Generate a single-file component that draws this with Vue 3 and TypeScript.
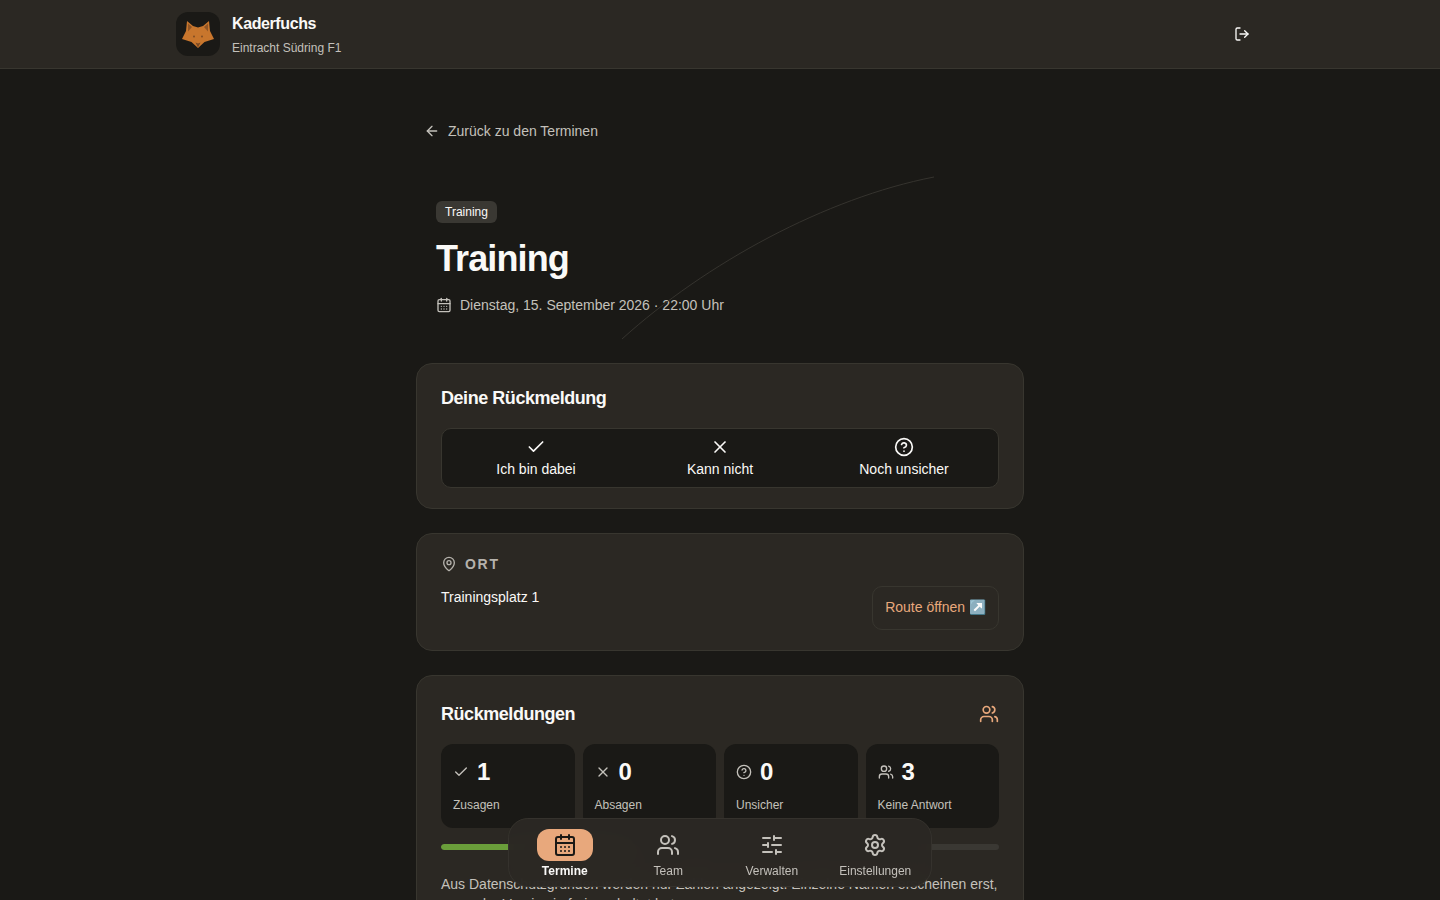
<script setup lang="ts">
const stats = [
  { icon: 'check', value: 1, label: 'Zusagen' },
  { icon: 'x', value: 0, label: 'Absagen' },
  { icon: 'help', value: 0, label: 'Unsicher' },
  { icon: 'users', value: 3, label: 'Keine Antwort' },
]
const choices = [
  { icon: 'check', label: 'Ich bin dabei' },
  { icon: 'x', label: 'Kann nicht' },
  { icon: 'help', label: 'Noch unsicher' },
]
const nav = [
  { icon: 'calendar', label: 'Termine', active: true },
  { icon: 'users', label: 'Team', active: false },
  { icon: 'sliders', label: 'Verwalten', active: false },
  { icon: 'settings', label: 'Einstellungen', active: false },
]
</script>

<template>
  <div class="page">
    <svg width="0" height="0" class="defs">
      <defs>
        <symbol id="i-check" viewBox="0 0 24 24"><path d="M20 6 9 17l-5-5" /></symbol>
        <symbol id="i-x" viewBox="0 0 24 24"><path d="M18 6 6 18" /><path d="m6 6 12 12" /></symbol>
        <symbol id="i-help" viewBox="0 0 24 24"><circle cx="12" cy="12" r="10" /><path d="M9.09 9a3 3 0 0 1 5.83 1c0 2-3 3-3 3" /><path d="M12 17h.01" /></symbol>
        <symbol id="i-users" viewBox="0 0 24 24"><path d="M16 21v-2a4 4 0 0 0-4-4H6a4 4 0 0 0-4 4v2" /><path d="M16 3.128a4 4 0 0 1 0 7.744" /><path d="M22 21v-2a4 4 0 0 0-3-3.87" /><circle cx="9" cy="7" r="4" /></symbol>
        <symbol id="i-calendar" viewBox="0 0 24 24"><path d="M8 2v4" /><path d="M16 2v4" /><rect x="3" y="4" width="18" height="18" rx="2" /><path d="M3 10h18" /><path d="M8 14h.01" /><path d="M12 14h.01" /><path d="M16 14h.01" /><path d="M8 18h.01" /><path d="M12 18h.01" /><path d="M16 18h.01" /></symbol>
        <symbol id="i-sliders" viewBox="0 0 24 24"><path d="M10 5H3" /><path d="M12 19H3" /><path d="M14 3v4" /><path d="M16 17v4" /><path d="M21 12h-9" /><path d="M21 19h-5" /><path d="M21 5h-7" /><path d="M8 10v4" /><path d="M8 12H3" /></symbol>
        <symbol id="i-settings" viewBox="0 0 24 24"><path d="M9.671 4.136a2.34 2.34 0 0 1 4.659 0 2.34 2.34 0 0 0 3.319 1.915 2.34 2.34 0 0 1 2.33 4.033 2.34 2.34 0 0 0 0 3.831 2.34 2.34 0 0 1-2.33 4.033 2.34 2.34 0 0 0-3.319 1.915 2.34 2.34 0 0 1-4.659 0 2.34 2.34 0 0 0-3.32-1.915 2.34 2.34 0 0 1-2.33-4.033 2.34 2.34 0 0 0 0-3.831A2.34 2.34 0 0 1 6.35 6.051a2.34 2.34 0 0 0 3.319-1.915" /><circle cx="12" cy="12" r="3" /></symbol>
        <symbol id="i-pin" viewBox="0 0 24 24"><path d="M20 10c0 4.993-5.539 10.193-7.399 11.799a1 1 0 0 1-1.202 0C9.539 20.193 4 14.993 4 10a8 8 0 0 1 16 0" /><circle cx="12" cy="10" r="3" /></symbol>
      </defs>
    </svg>

    <header class="topbar">
      <div class="topbar-inner">
        <div class="brand">
          <div class="logo">
            <svg viewBox="0 0 44 44" width="44" height="44">
              <path d="M11 9 L17 14 L22 15.5 L27 14 L33 9 L34 19 L38 27 L28.5 30 L22 36 L15.5 30 L6 27 L10 19 Z" fill="#c8762d" />
              <path d="M12 11.5 L16 15 L12 19.5 Z" fill="#8f5526" />
              <path d="M32 11.5 L28 15 L32 19.5 Z" fill="#8f5526" />
              <path d="M19.5 30.5 L22 31.5 L24.5 30.5 L22 35.5 Z" fill="#7a4a24" />
              <circle cx="18" cy="24.5" r="0.9" fill="#7a4a24" />
              <circle cx="26" cy="24.5" r="0.9" fill="#7a4a24" />
            </svg>
          </div>
          <div class="brand-text">
            <div class="brand-name">Kaderfuchs</div>
            <div class="brand-team">Eintracht Südring F1</div>
          </div>
        </div>
        <button class="logout" type="button" aria-label="Abmelden">
          <svg class="ico" viewBox="0 0 24 24" width="16" height="16"><path d="m16 17 5-5-5-5" /><path d="M21 12H9" /><path d="M9 21H5a2 2 0 0 1-2-2V5a2 2 0 0 1 2-2h4" /></svg>
        </button>
      </div>
    </header>

    <main class="main">
      <a class="back">
        <svg class="ico" viewBox="0 0 24 24" width="16" height="16"><path d="m12 19-7-7 7-7" /><path d="M19 12H5" /></svg>
        <span>Zurück zu den Terminen</span>
      </a>

      <section class="hero">
        <svg class="arc" viewBox="0 0 320 170" width="320" height="170"><path d="M6 166 C 90 90, 210 25, 318 4" /></svg>
        <span class="tag">Training</span>
        <h1>Training</h1>
        <div class="when">
          <svg class="ico" width="16" height="16"><use href="#i-calendar" /></svg>
          <span>Dienstag, 15. September 2026 · 22:00 Uhr</span>
        </div>
      </section>

      <section class="card compact">
        <h2>Deine Rückmeldung</h2>
        <div class="choices">
          <button v-for="c in choices" :key="c.label" class="choice" type="button">
            <svg class="ico" width="20" height="20"><use :href="`#i-${c.icon}`" /></svg>
            <span>{{ c.label }}</span>
          </button>
        </div>
      </section>

      <section class="card compact">
        <div class="eyebrow">
          <svg class="ico" width="16" height="16"><use href="#i-pin" /></svg>
          <span>ORT</span>
        </div>
        <div class="place-row">
          <div class="place-name">Trainingsplatz 1</div>
          <a class="route">Route öffnen ↗️</a>
        </div>
      </section>

      <section class="card">
        <div class="resp-head">
          <h2>Rückmeldungen</h2>
          <svg class="ico accent" width="20" height="20"><use href="#i-users" /></svg>
        </div>
        <div class="stats">
          <div v-for="s in stats" :key="s.label" class="stat">
            <div class="stat-top">
              <svg class="ico" width="16" height="16"><use :href="`#i-${s.icon}`" /></svg>
              <span class="stat-num">{{ s.value }}</span>
            </div>
            <div class="stat-label">{{ s.label }}</div>
          </div>
        </div>
        <div class="bar"><div class="bar-fill" :style="{ width: '33.33%' }"></div></div>
        <p class="note">Aus Datenschutzgründen werden nur Zahlen angezeigt. Einzelne Namen erscheinen erst, wenn der Verein sie freigeschaltet hat.</p>
      </section>
    </main>

    <nav class="dock">
      <a v-for="n in nav" :key="n.label" class="dock-item" :class="{ active: n.active }">
        <span class="dock-icon">
          <svg class="ico" width="24" height="24"><use :href="`#i-${n.icon}`" /></svg>
        </span>
        <span class="dock-label">{{ n.label }}</span>
      </a>
    </nav>
  </div>
</template>

<style>
html, body { background: #1a1916; }
</style>

<style scoped>
.page {
  min-height: 100vh;
  background: #1a1916;
  color: #faf9f7;
  font-family: "Liberation Sans", Arial, sans-serif;
  font-size: 14px;
  padding-bottom: 120px;
}
.defs { position: absolute; }
.ico {
  fill: none;
  stroke: currentColor;
  stroke-width: 2;
  stroke-linecap: round;
  stroke-linejoin: round;
  flex: none;
  display: block;
}
.topbar {
  height: 69px;
  box-sizing: border-box;
  background: #2b2823;
  border-bottom: 1px solid #38362f;
}
.topbar-inner {
  width: 1088px;
  height: 68px;
  margin: 0 auto;
  display: flex;
  align-items: center;
  justify-content: space-between;
}
.brand { display: flex; align-items: center; gap: 12px; }
.logo {
  width: 44px;
  height: 44px;
  border-radius: 12px;
  background: #1a1916;
  overflow: hidden;
}
.logo svg { display: block; }
.brand-name {
  font-size: 16px;
  line-height: 24px;
  font-weight: 700;
  letter-spacing: -0.4px;
}
.brand-team {
  font-size: 12px;
  line-height: 16px;
  margin-top: 4px;
  color: #c4c1bb;
}
.logout {
  width: 44px;
  height: 44px;
  padding: 0;
  border: 0;
  background: transparent;
  color: #faf9f7;
  display: flex;
  align-items: center;
  justify-content: center;
}
.main {
  width: 608px;
  margin: 0 auto;
  padding-top: 48px;
}
.back {
  display: flex;
  align-items: center;
  gap: 8px;
  height: 28px;
  padding-left: 8px;
  color: #c4c1bb;
}
.hero {
  position: relative;
  padding: 56px 20px 0;
  height: 162px;
  box-sizing: content-box;
}
.arc {
  position: absolute;
  left: 200px;
  top: 28px;
  fill: none;
  stroke: #35332e;
  stroke-width: 1;
}
.tag {
  display: inline-block;
  background: #3a3833;
  border-radius: 6px;
  padding: 0 9px;
  font-size: 12px;
  line-height: 22px;
}
h1 {
  margin: 16px 0 0;
  font-size: 36px;
  line-height: 40px;
  font-weight: 700;
  letter-spacing: -0.9px;
}
.when {
  margin-top: 18px;
  display: flex;
  align-items: center;
  gap: 8px;
  color: #c4c1bb;
}
.card {
  background: #2b2823;
  border: 1px solid #38362f;
  border-radius: 16px;
  padding: 24px;
  margin-bottom: 24px;
}
.compact { padding: 20px 24px; }
h2 {
  margin: 0;
  font-size: 18px;
  line-height: 28px;
  font-weight: 700;
  letter-spacing: -0.45px;
}
.choices {
  margin-top: 16px;
  display: grid;
  grid-template-columns: repeat(3, 1fr);
  gap: 4px;
  padding: 0 4px;
  height: 60px;
  box-sizing: border-box;
  background: #1a1916;
  border: 1px solid #38362f;
  border-radius: 10px;
}
.choice {
  border: 0;
  background: transparent;
  color: #faf9f7;
  font: inherit;
  line-height: 20px;
  display: flex;
  flex-direction: column;
  align-items: center;
  justify-content: center;
  gap: 2px;
  padding: 0;
}
.eyebrow {
  display: flex;
  align-items: center;
  gap: 8px;
  color: #b5b2ac;
  font-size: 14px;
  line-height: 20px;
  font-weight: 700;
  letter-spacing: 1.7px;
}
.place-row {
  margin-top: 12px;
  display: flex;
  justify-content: space-between;
  align-items: flex-start;
}
.place-name { line-height: 22px; }
.route {
  display: block;
  height: 44px;
  box-sizing: border-box;
  border: 1px solid #38362f;
  border-radius: 10px;
  padding: 0 12px;
  line-height: 40px;
  color: #e8a87c;
}
.resp-head {
  display: flex;
  align-items: center;
  justify-content: space-between;
  height: 28px;
}
.accent { color: #e8a87c; }
.stats {
  margin-top: 16px;
  display: grid;
  grid-template-columns: repeat(4, 1fr);
  gap: 8px;
}
.stat {
  background: #1a1916;
  border-radius: 12px;
  padding: 12px;
  height: 84px;
  box-sizing: border-box;
}
.stat-top {
  display: flex;
  align-items: center;
  gap: 8px;
  height: 32px;
  color: #c4c1bb;
}
.stat-num {
  font-size: 24px;
  line-height: 32px;
  font-weight: 700;
  color: #faf9f7;
}
.stat-label {
  margin-top: 9px;
  font-size: 12px;
  line-height: 16px;
  color: #c4c1bb;
}
.bar {
  margin-top: 16px;
  height: 6px;
  border-radius: 3px;
  background: #3a3833;
  overflow: hidden;
}
.bar-fill { height: 100%; background: #6a9e3a; border-radius: 3px; }
.note {
  margin: 24px 0 0;
  line-height: 20px;
  color: #c4c1bb;
}
.dock {
  position: fixed;
  left: 508px;
  top: 818px;
  width: 424px;
  height: 69px;
  box-sizing: border-box;
  background: rgba(43, 40, 35, 0.96);
  backdrop-filter: blur(12px);
  border: 1px solid #35322d;
  border-radius: 20px;
  padding: 10px 4px 0;
  display: grid;
  grid-template-columns: repeat(4, 1fr);
}
.dock-item {
  display: flex;
  flex-direction: column;
  align-items: center;
  color: #c4c1bb;
}
.dock-icon {
  width: 56px;
  height: 32px;
  border-radius: 12px;
  display: flex;
  align-items: center;
  justify-content: center;
}
.dock-label {
  margin-top: 2px;
  font-size: 12px;
  line-height: 16px;
}
.active { color: #faf9f7; }
.active .dock-icon { background: #e8a87c; color: #1a1916; }
.active .dock-label { font-weight: 700; }
</style>
